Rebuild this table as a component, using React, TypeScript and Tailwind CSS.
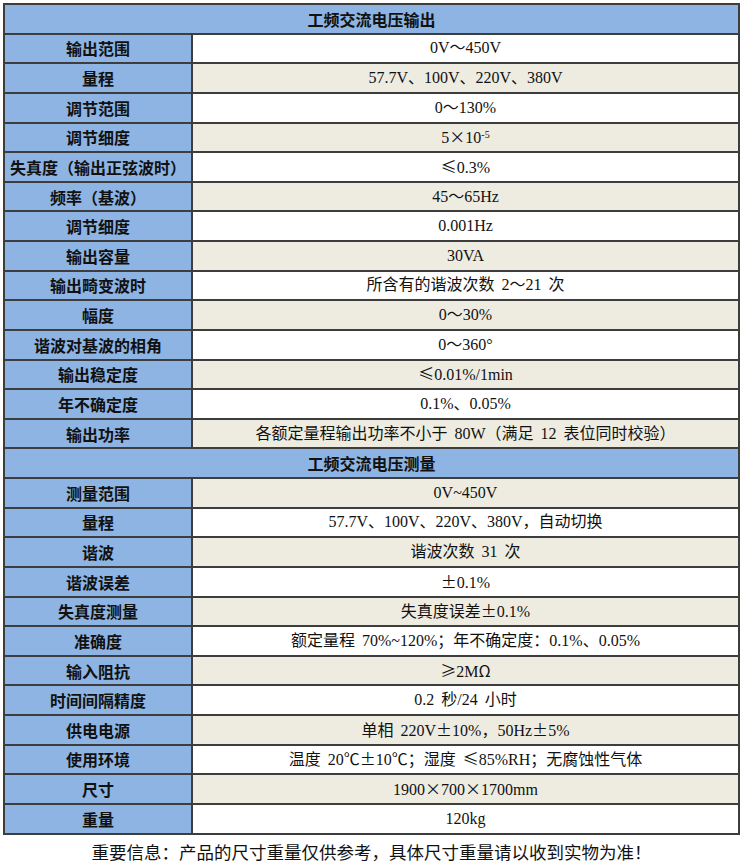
import type { ReactNode } from 'react';

type Row = { label: string; value: ReactNode };

const output: Row[] = [
  { label: '输出范围', value: '0V～450V' },
  { label: '量程', value: '57.7V、100V、220V、380V' },
  { label: '调节范围', value: '0～130%' },
  { label: '调节细度', value: <>5<W>×</W>10<sup className="text-[10px] relative -top-[5px]">-5</sup></> },
  { label: '失真度（输出正弦波时）', value: '≤0.3%' },
  { label: '频率（基波）', value: '45～65Hz' },
  { label: '调节细度', value: '0.001Hz' },
  { label: '输出容量', value: '30VA' },
  { label: '输出畸变波时', value: '所含有的谐波次数 2～21 次' },
  { label: '幅度', value: '0～30%' },
  { label: '谐波对基波的相角', value: '0～360°' },
  { label: '输出稳定度', value: '≤0.01%/1min' },
  { label: '年不确定度', value: '0.1%、0.05%' },
  { label: '输出功率', value: '各额定量程输出功率不小于 80W（满足 12 表位同时校验）' },
];

const measure: Row[] = [
  { label: '测量范围', value: '0V~450V' },
  { label: '量程', value: '57.7V、100V、220V、380V，自动切换' },
  { label: '谐波', value: '谐波次数 31 次' },
  { label: '谐波误差', value: '±0.1%' },
  { label: '失真度测量', value: '失真度误差±0.1%' },
  { label: '准确度', value: '额定量程 70%~120%；年不确定度：0.1%、0.05%' },
  { label: '输入阻抗', value: '≥2MΩ' },
  { label: '时间间隔精度', value: '0.2 秒/24 小时' },
  { label: '供电电源', value: '单相 220V±10%，50Hz±5%' },
  { label: '使用环境', value: '温度 20℃±10℃；湿度 ≤85%RH；无腐蚀性气体' },
  { label: '尺寸', value: '1900×700×1700mm' },
  { label: '重量', value: '120kg' },
];

const sans = "font-['Noto_Sans_CJK_SC',sans-serif]";
const serif = "font-['Liberation_Serif','Noto_Sans_CJK_SC',serif]";

// full-width symbols, drawn with the CJK face like the original sheet
function W({ children }: { children: ReactNode }) {
  return <span className={sans}>{children}</span>;
}

const wide = /([×±≤≥℃Ω])/;

function renderValue(v: ReactNode) {
  if (typeof v !== 'string') return v;
  return v.split(wide).map((part, i) => (wide.test(part) ? <W key={i}>{part}</W> : part));
}

const Header = ({ title }: { title: string }) => (
  <div className={`col-span-2 bg-[#8db4e2] flex items-center justify-center text-[16px] font-bold text-[#111] ${sans}`}>
    {title}
  </div>
);

const Rows = ({ rows, firstBeige }: { rows: Row[]; firstBeige: boolean }) => (
  <>
    {rows.map((r, i) => {
      const beige = (i % 2 === 0) === firstBeige;
      return (
        <div key={r.label + i} className="contents">
          <div className={`bg-[#8db4e2] flex items-center justify-center text-[16px] font-bold text-[#111] whitespace-nowrap ${sans}`}>
            {r.label}
          </div>
          <div
            className={`flex items-center justify-center text-[16px] [word-spacing:3px] text-[#111] whitespace-nowrap ${serif} ${
              beige ? 'bg-[#eeece1]' : 'bg-white'
            }`}
          >
            <span>{renderValue(r.value)}</span>
          </div>
        </div>
      );
    })}
  </>
);

export default function App() {
  return (
    <div className="w-[750px] h-[865px] bg-white pt-[3px] pl-[3px]">
      <div className="w-[737px] grid grid-cols-[186px_1fr] auto-rows-[27.64px] gap-[2px] p-[2px] bg-[#3d3d3d]">
        <Header title="工频交流电压输出" />
        <Rows rows={output} firstBeige={false} />
        <Header title="工频交流电压测量" />
        <Rows rows={measure} firstBeige={true} />
      </div>
      <p className={`mt-[4px] w-[737px] text-center text-[17.5px] text-[#111] ${sans}`}>
        重要信息：产品的尺寸重量仅供参考，具体尺寸重量请以收到实物为准！
      </p>
    </div>
  );
}
